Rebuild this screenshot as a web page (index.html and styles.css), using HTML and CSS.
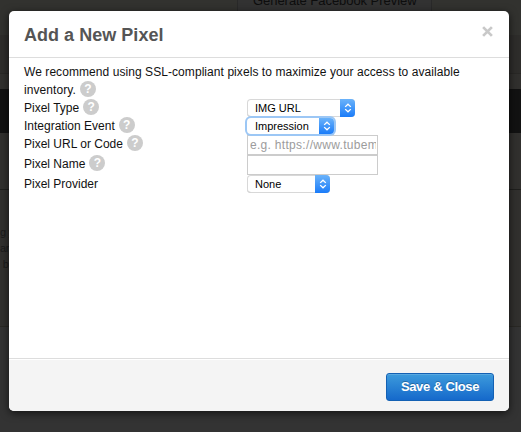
FILE: index.html
```html
<!DOCTYPE html>
<html lang="en">
<head>
<meta charset="utf-8">
<title>Add a New Pixel</title>
<link rel="stylesheet" href="styles.css">
</head>
<body>
<div class="page" aria-hidden="true">
  <div class="band band-top"><span class="preview">Generate Facebook Preview</span></div>
  <div class="band band-tabs"></div>
  <div class="band band-gap"></div>
  <div class="band band-nav"></div>
  <div class="band band-head"></div>
  <div class="band band-copy"><p class="copy">g y<br>ar<br>&nbsp;b</p></div>
  <div class="band band-rest"></div>
</div>
<section class="modal" role="dialog">
  <header class="modal-header">
    <h3 class="title">Add a New Pixel</h3>
    <svg class="close" viewBox="0 0 10 10"><path d="M1 1 9 9M9 1 1 9"/></svg>
  </header>
  <div class="modal-body">
    <p class="intro"><span class="intro-text">We recommend using SSL-compliant pixels to maximize your access to available</span><br><span class="intro-text">inventory.</span><i class="help">?</i></p>
    <div class="row"><label class="label">Pixel Type<i class="help">?</i></label>
      <div class="select wide"><span class="value">IMG URL</span><span class="arrows"><svg viewBox="0 0 8 10"><path d="M1.2 3.9 4 1.2 6.8 3.9M1.2 6.1 4 8.8 6.8 6.1"/></svg></span></div></div>
    <div class="row"><label class="label">Integration Event<i class="help">?</i></label>
      <div class="select medium focused"><span class="value">Impression</span><span class="arrows"><svg viewBox="0 0 8 10"><path d="M1.2 3.9 4 1.2 6.8 3.9M1.2 6.1 4 8.8 6.8 6.1"/></svg></span></div></div>
    <div class="row tall"><label class="label">Pixel URL or Code<i class="help">?</i></label>
      <div class="field"><span class="placeholder">e.g. https://www.tubem</span></div></div>
    <div class="row tall"><label class="label">Pixel Name<i class="help">?</i></label>
      <div class="field"></div></div>
    <div class="row"><label class="label">Pixel Provider</label>
      <div class="select small"><span class="value">None</span><span class="arrows"><svg viewBox="0 0 8 10"><path d="M1.2 3.9 4 1.2 6.8 3.9M1.2 6.1 4 8.8 6.8 6.1"/></svg></span></div></div>
  </div>
  <footer class="modal-footer"><button class="save"><span>Save &amp; Close</span></button></footer>
</section>
</body>
</html>
```
FILE: styles.css
```css
* { box-sizing: border-box; }
body {
  margin: 0;
  width: 521px;
  height: 432px;
  overflow: hidden;
  position: relative;
  background: #333;
  color: #111;
  font: 12px/18px "Liberation Sans", Arial, sans-serif;
}
p, h3 { margin: 0; }
.page { height: 432px; display: flex; flex-direction: column; }
.band { flex: none; background: #31302e; overflow: hidden; }
.band-top { height: 35px; background: #32322f; padding-left: 237px; }
.preview {
  display: block;
  width: 195px;
  height: 12px;
  padding-left: 15px;
  border: solid #292929;
  border-width: 0 1px 1px;
  background: #323232;
  color: #0d0d0d;
  font-size: 13px;
  line-height: 2px;
  letter-spacing: -.05px;
  white-space: nowrap;
}
.band-tabs { height: 39px; background: #2e2d2b; border-bottom: 1px solid #292826; }
.band-gap { height: 15px; }
.band-nav { height: 44px; background: #121212; }
.band-head { height: 57px; border-bottom: 1px solid #1f1f1d; }
.band-copy { height: 137px; padding-top: 34px; border-bottom: 1px solid #292824; }
.band-rest { flex: 1; background: #333; }
.copy { color: #1a1a1a; font-size: 11px; line-height: 16px; letter-spacing: -.3px; }
.modal {
  position: absolute;
  left: 9px;
  top: 11px;
  width: 500px;
  height: 400px;
  display: flex;
  flex-direction: column;
  background: #fff;
  border-radius: 5px;
  overflow: hidden;
  box-shadow: 0 2px 8px rgba(0, 0, 0, .65);
}
.modal-header {
  flex: none;
  height: 47px;
  padding: 0 16px 0 15px;
  border-bottom: 1px solid #ddd;
  display: flex;
  justify-content: space-between;
}
.title { color: #555; font-size: 18px; line-height: 48px; letter-spacing: .03px; }
.close { width: 11px; height: 11px; margin-top: 15px; fill: none; stroke: #c9c9c9; stroke-width: 2.5; }
.modal-body { flex: 1; padding: 5px 15px 0; }
.intro { height: 36px; white-space: nowrap; }
.intro-text { letter-spacing: .066px; }
.row { display: flex; height: 18px; }
.tall { height: 20px; }
.label { width: 223px; flex: none; white-space: nowrap; }
.help {
  display: inline-block;
  width: 16px;
  height: 16px;
  margin: 0 0 0 4px;
  border-radius: 50%;
  background: #ccc;
  color: #fff;
  font: bold 12px/16px "Liberation Sans", Arial, sans-serif;
  text-align: center;
  vertical-align: top;
}
.select {
  display: flex;
  height: 18px;
  border-radius: 4px;
  overflow: hidden;
  background: #fff;
  box-shadow: inset 0 0 0 1px #d8d8d8, inset 0 -1px 0 #bbb;
  font-size: 11px;
}
.value { flex: 1; padding-left: 8px; color: #000; }
.wide { width: 108px; }
.medium { width: 87px; height: 16px; margin-top: 1px; line-height: 17px; }
.small { width: 83px; }
.focused { box-shadow: 0 0 0 2px #9cc7f5; position: relative; }
.arrows {
  width: 15px;
  display: flex;
  align-items: center;
  justify-content: center;
  background: linear-gradient(#6bb3fa, #1a7cf9);
}
.arrows svg { width: 8px; height: 10px; fill: none; stroke: #fff; stroke-width: 1.3; }
.field {
  width: 131px;
  height: 20px;
  border: 1px solid #ccc;
  padding: 0 1px 0 2px;
}
.placeholder {
  display: block;
  overflow: hidden;
  white-space: nowrap;
  color: #9c9c9c;
  letter-spacing: .3px;
}
.modal-footer {
  flex: none;
  height: 53px;
  padding: 14px 15px 0;
  border-top: 1px solid #ddd;
  background: #f4f4f4;
  box-shadow: inset 0 1px 0 #fff;
  display: flex;
  justify-content: flex-end;
}
.save {
  width: 108px;
  height: 28px;
  padding: 0;
  border: 1px solid #1461b4;
  border-radius: 3px;
  background: linear-gradient(#3d9bdc, #1569cb);
  box-shadow: inset 0 1px 0 rgba(255, 255, 255, .15);
  color: #fff;
  font: bold 13px/26px "Liberation Sans", Arial, sans-serif;
  letter-spacing: -.35px;
  text-shadow: 0 -1px 0 rgba(0, 0, 0, .25);
}
```
